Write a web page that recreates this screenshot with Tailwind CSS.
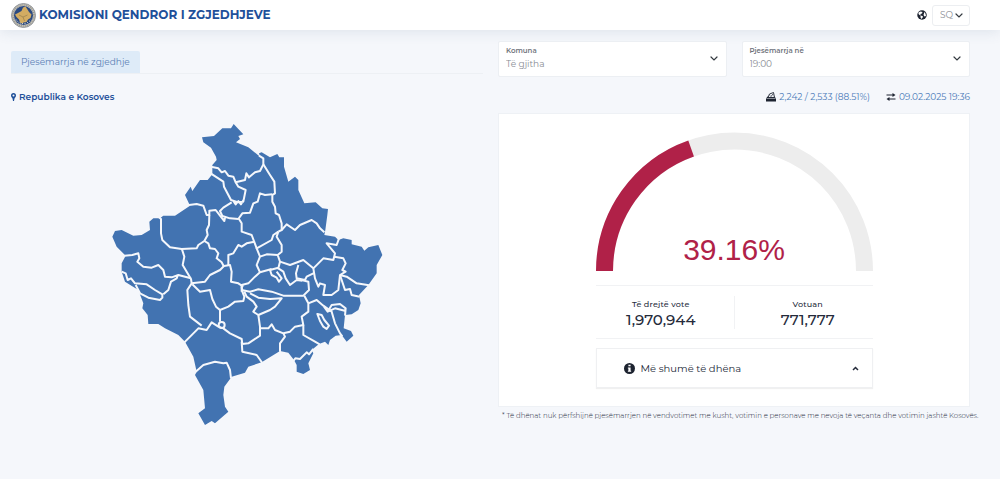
<!DOCTYPE html>
<html lang="sq">
<head>
    <meta charset="UTF-8">
    <meta name="viewport" content="width=device-width, initial-scale=1">
    <title>Komisioni Qendror i Zgjedhjeve</title>
    <script src="https://cdn.jsdelivr.net/npm/@tailwindcss/browser@4"></script>
</head>
<body class="min-h-screen bg-[#f5f7fb] font-['Montserrat','Inter',sans-serif] text-[#252b3b]">

    <header class="flex h-[30px] items-center justify-between bg-white pl-[11px] pr-[30px] shadow-[0_2px_14px_rgba(60,90,120,0.12)]">
        <a href="#" class="flex items-center gap-[3px]">
            <svg class="size-[25px]" viewBox="0 0 50 50" aria-hidden="true">
                <circle cx="25" cy="25" r="24" fill="#c3c2bc" stroke="#7d8188" stroke-width="1.5"/>
                <circle cx="25" cy="25" r="21" fill="none" stroke="#9a978b" stroke-width="3" stroke-dasharray="2 2"/>
                <circle cx="25" cy="25" r="19" fill="#2c4a80"/>
                <path fill="#d3ac62" d="M29 7l4 6 3 5 5 5-2 7-5 3-3 5-6 1-3 2-4-2-2-6-5-5-3-5 6-3 7-4 3-7z"/>
                <path fill="none" stroke="#8f7748" stroke-width="1.200" d="M16 24l8 4 3 8M24 28l9-4"/>
                <path fill="none" stroke="#e9e6da" stroke-width="2" stroke-dasharray="2 3" d="M10 33c5 9 20 13 30 0"/>
            </svg>
            <span class="text-[12px] font-bold text-[#1f509a]">KOMISIONI QENDROR I ZGJEDHJEVE</span>
        </a>
        <div class="flex items-center gap-[5px]">
            <svg class="size-[10px]" viewBox="0 0 20 20" aria-hidden="true">
                <circle cx="10" cy="10" r="9.5" fill="#1d2330"/>
                <path fill="#fff" d="M3 5l4-2 4 1-1 3-3 1v3l-2-1-2-2zM7 11l4 1 1 2-3 4-2-3zM14 4l3 3 1 5-3 1-2-3 1-3z"/>
            </svg>
            <div class="relative flex">
                <select aria-label="Gjuha" class="h-[21px] w-[38px] appearance-none rounded-[3px] border border-[#eceef1] bg-white pl-[7px] text-[9px] text-[#8a8d94]">
                    <option>SQ</option>
                    <option>SR</option>
                    <option>EN</option>
                </select>
                <svg class="pointer-events-none absolute right-[7px] top-[8px] h-[5px] w-[8px]" viewBox="0 0 8 5" fill="none" stroke="#343a40" stroke-width="1.2" stroke-linecap="round" aria-hidden="true"><path d="M1 1l3 3 3-3"/></svg>
            </div>
        </div>
    </header>

    <main class="grid grid-cols-2 gap-[15px] pl-[11px] pr-[30px] pt-[11px]">

        <section>
            <nav class="mt-[10px] flex border-b border-[#edf0f4]">
                <a href="#" class="rounded-t-[2px] bg-[#deebf8] px-[10px] py-[5px] text-[9px] leading-[12px] text-[#5b7fb5]">Pjesëmarrja në zgjedhje</a>
            </nav>
            <h1 class="mt-[17px] flex items-center gap-[3px] text-[9px] font-semibold leading-[12px] text-[#1f509a]">
                <svg class="h-[8px] w-[5px]" viewBox="0 0 10 16" fill="#1f509a" aria-hidden="true"><path fill-rule="evenodd" d="M5 0a5 5 0 0 1 5 5c0 3-2 4-3 6l-1 5H4l-1-5C2 9 0 8 0 5a5 5 0 0 1 5-5zm0 3a2 2 0 1 0 0 4 2 2 0 0 0 0-4z"/></svg>
                Republika e Kosoves
            </h1>

            <svg class="ml-[94px] mt-[12px] w-[280px]" viewBox="0 0 840 936" role="img" aria-label="Harta e komunave">
                <!-- territori -->
                <path fill="#4273b1" d="M291 67 327 63 352 40 378 40 386 27 415 58 400 63 405 72 393 82 430 97 465 125 462 115 470 112 495 127 517 117 523 127 537 127 537 155 550 200 570 185 580 195 580 225 598 265 632 262 652 280 669 282 667 300 661 345 658 360 690 365 700 375 715 370 740 375 740 388 770 395 778 407 790 397 820 390 832 420 815 450 815 475 790 510 762 540 767 565 760 585 740 598 720 600 716 640 738 648 745 662 725 680 710 660 692 662 675 675 670 690 660 680 642 687 620 705 625 715 610 745 615 765 595 777 575 770 575 750 567 735 550 713 525 708 470 742 430 755 420 773 380 785 358 815 355 840 360 875 370 890 330 925 320 918 300 930 280 895 300 880 295 825 270 780 275 770 265 725 240 680 220 660 180 640 160 627 130 627 128 600 112 580 115 565 100 525 60 500 50 470 50 445 62 422 35 395 22 365 30 348 50 345 85 362 110 360 135 345 133 320 145 310 165 310 175 302 210 302 255 272 240 240 257 215 262 228 285 195 308 195 322 178 322 150 335 135 333 125 318 98 295 82Z"/>
                <!-- kufijtë e komunave -->
                <g fill="none" stroke="#f5f7fb" stroke-width="6" stroke-linejoin="round">
                    <path d="M318 155 340 160 350 172 360 168 370 182 385 185 392 202 420 195 424 175 432 187 450 172 465 168 475 148 475 130 462 122"/>
                    <path d="M475 148 495 180 508 200 510 235 502 240 502 260 510 275 512 295 522 300 530 325 530 345 520 350"/>
                    <path d="M318 176 355 200 357 215 378 255 400 262 415 260 422 225 400 215 392 202M385 258 392 268 400 258 408 268 416 254"/>
                    <path d="M380 262 355 278 345 288 352 303 375 310 400 312 412 295 435 293 445 265 458 260 465 235 480 240 502 238"/>
                    <path d="M252 270 275 267 295 272 305 300 313 300 313 287 332 285 345 302 358 318 360 308"/>
                    <path d="M313 300 312 330 305 345 308 360 298 378 280 390 275 400 230 402 195 397 172 375 168 355 168 312 162 307"/>
                    <path d="M298 378 310 385 315 400 330 402 340 415 335 430 350 442 357 455"/>
                    <path d="M230 400 238 425 233 450 245 470 258 492 260 505 247 525 250 570 255 605 290 632"/>
                    <path d="M58 422 82 420 100 415 103 430 97 440 115 455 140 458 160 450 175 465 180 485 200 487 220 480 258 490M218 482 215 490 198 500 190 525 175 538"/>
                    <path d="M50 470 62 475 68 495 78 490 90 505 125 508 150 525 172 538 172 548 165 555 130 548 105 535 92 510"/>
                    <path d="M260 505 300 500 315 480 345 465 357 453 375 450 380 470 378 500 400 505 415 515"/>
                    <path d="M262 508 285 530 315 525 322 552 333 575 345 585 370 575 390 560 415 558 418 545 412 530 410 515"/>
                    <path d="M345 585 345 620M238 682 280 640 305 645 320 622 340 635 355 640 375 655 410 672 412 687"/>
                    <path d="M410 680 412 710 455 720 472 744"/>
                    <circle cx="350" cy="630" r="9"/>
                    <path d="M412 687 430 685 465 662 465 635 460 600 445 590 455 575 445 560 425 545 418 530"/>
                    <path d="M460 600 495 585 510 575 530 550 495 552 460 548 435 535"/>
                    <path d="M410 525 435 530 460 523 500 530 535 542 595 542 612 525 610 500 590 495"/>
                    <path d="M598 542 610 565 610 590 590 605 595 630 570 635 555 650 535 655 510 645 500 628 490 640 465 640M535 655 540 665 525 685 525 710"/>
                    <path d="M595 630 595 660 630 680 644 688M565 738 571 730 585 732 605 712 612 718 625 702"/>
                    <path d="M610 565 635 555 655 572 680 590 690 625 705 655 712 664"/>
                    <path d="M637 597 650 600 658 615 672 632 665 642 655 635 645 618Z"/>
                    <path d="M657 575 668 590 680 570 705 567 722 580 720 602M668 590 690 580 722 588"/>
                    <path d="M530 345 545 328 570 345 585 330 620 315 635 325 645 340 658 352"/>
                    <path d="M520 350 515 365 530 390 530 410 518 420 525 440 555 450 595 435 625 460 655 430 685 435 690 415 665 385 695 390 702 370"/>
                    <path d="M688 425 715 430 722 445 712 465 722 470 705 480 725 485 755 505 792 511M705 480 720 525 735 522 740 540 764 545"/>
                    <path d="M705 480 700 525 680 540 655 540 660 510 645 505 640 515 630 490 625 460M625 475 605 485 600 495 575 490 573 475 580 450"/>
                    <path d="M525 440 520 460 535 470 542 490 555 510 575 495 592 497M520 458 495 465 500 480 515 488 522 500 530 490 515 470"/>
                    <path d="M500 462 465 472 450 485 430 505 410 510 410 530"/>
                    <path d="M465 472 455 450 465 425 455 400 500 375 505 360 520 350M465 425 485 418 518 420"/>
                    <path d="M455 400 440 360 410 350 410 325 402 312M448 380 425 385 410 395 400 390 385 415 370 420 370 450"/>
                    <path d="M272 770 295 750 330 740 355 745 365 743 375 765 378 790"/>
                </g>
            </svg>
        </section>

        <section>
            <div class="grid grid-cols-2 gap-[15px]">
                <div class="relative h-[36px] rounded-[2px] border border-[#eceff3] bg-white">
                    <label for="komuna" class="pointer-events-none absolute left-[7px] top-[4px] text-[7px] font-semibold leading-[10px] text-[#70747c]">Komuna</label>
                    <select id="komuna" class="block size-full appearance-none bg-transparent pl-[7px] pt-[10px] text-[9px] text-[#8a8d94]">
                        <option>Të gjitha</option>
                    </select>
                    <svg class="pointer-events-none absolute right-[8px] top-[14px] h-[5px] w-[8px]" viewBox="0 0 8 5" fill="none" stroke="#343a40" stroke-width="1.2" stroke-linecap="round" aria-hidden="true"><path d="M1 1l3 3 3-3"/></svg>
                </div>
                <div class="relative h-[36px] rounded-[2px] border border-[#eceff3] bg-white">
                    <label for="ora" class="pointer-events-none absolute left-[7px] top-[4px] text-[7px] font-semibold leading-[10px] text-[#70747c]">Pjesëmarrja në</label>
                    <select id="ora" class="block size-full appearance-none bg-transparent pl-[7px] pt-[10px] text-[9px] text-[#8a8d94]">
                        <option>19:00</option>
                    </select>
                    <svg class="pointer-events-none absolute right-[8px] top-[14px] h-[5px] w-[8px]" viewBox="0 0 8 5" fill="none" stroke="#343a40" stroke-width="1.2" stroke-linecap="round" aria-hidden="true"><path d="M1 1l3 3 3-3"/></svg>
                </div>
            </div>

            <div class="mt-[14px] flex justify-end gap-4 text-[9px] leading-[12px] text-[#4a7ab8]">
                <span class="flex items-center gap-[3px]">
                    <svg class="h-[10px] w-[10px]" viewBox="0 0 20 20" aria-hidden="true">
                        <path fill="#1d2330" d="M3 9h14l3 4v6H0v-6z"/>
                        <path fill="#f5f7fb" stroke="#1d2330" stroke-width="1.8" d="M4 11l3-7 8-3 2 10z"/>
                        <path fill="none" stroke="#1d2330" stroke-width="1.5" d="M8 7l2 2 4-5"/>
                        <path stroke="#f5f7fb" d="M1 13h18"/>
                    </svg>
                    2,242 / 2,533 (88.51%)
                </span>
                <span class="flex items-center gap-[3px]">
                    <svg class="h-[8px] w-[10px]" viewBox="0 0 20 16" fill="#1d2330" aria-hidden="true"><path d="M1 3h12V0l6 4-6 4V5H1zM19 11H7V8l-6 4 6 4v-3h12z"/></svg>
                    09.02.2025 19:36
                </span>
            </div>

            <div class="mt-[10px] flex flex-col items-center border border-[#eef1f5] bg-white pb-[18px] pt-[18px]">
                <div class="relative w-[277px]">
                    <svg class="w-full" viewBox="0 0 277 139" fill="none" stroke-width="17" aria-hidden="true">
                        <path stroke="#ededed" d="M8.500 139a130 130 0 0 1 260 0"/>
                        <path stroke="#b02148" pathLength="100" stroke-dasharray="39.16 100" d="M8.500 139a130 130 0 0 1 260 0"/>
                    </svg>
                    <p class="absolute inset-x-0 bottom-[4px] text-center font-['Liberation_Sans',Arial,sans-serif] text-[30px] leading-[34px] text-[#b02148]">39.16%</p>
                </div>

                <dl class="mt-[14px] grid w-[277px] grid-cols-2 border-y border-[#f1f2f4] pb-[9px] pt-[10px] text-center">
                    <div class="pr-[8px]">
                        <dt class="pt-[2px] text-[8px] font-medium leading-[12px] tracking-wide">Të drejtë vote</dt>
                        <dd class="text-[15px] font-medium leading-[19px]">1,970,944</dd>
                    </div>
                    <div class="border-l border-[#f1f2f4] pl-[8px]">
                        <dt class="pt-[2px] text-[8px] font-medium leading-[12px] tracking-wide">Votuan</dt>
                        <dd class="text-[15px] font-medium leading-[19px]">771,777</dd>
                    </div>
                </dl>

                <button type="button" class="mt-[9px] flex h-[40px] w-[277px] items-center border border-[#eff0f2] bg-white pl-[27px] pr-[13px] text-[10px] shadow-[0_1px_1px_rgba(0,0,0,0.06)]">
                    <svg class="mr-[6px] size-[11px]" viewBox="0 0 20 20" aria-hidden="true">
                        <circle cx="10" cy="10" r="10" fill="#1d2330"/>
                        <path fill="#fff" d="M8 3h4v3H8zM7 8h5v6h1v2H7v-2h1v-4H7z"/>
                    </svg>
                    Më shumë të dhëna
                    <svg class="ml-auto h-[5px] w-[7px]" viewBox="0 0 7 5" fill="none" stroke="#252b3b" stroke-width="1.5" aria-hidden="true"><path d="M1 4l2.500-2.500L6 4"/></svg>
                </button>
            </div>
            <p class="mt-[3px] whitespace-nowrap pl-[4px] text-[7px] font-light leading-[12px] text-[#252b3b]">* Të dhënat nuk përfshijnë pjesëmarrjen në vendvotimet me kusht, votimin e personave me nevoja të veçanta dhe votimin jashtë Kosovës.</p>
        </section>
    </main>

</body>
</html>
